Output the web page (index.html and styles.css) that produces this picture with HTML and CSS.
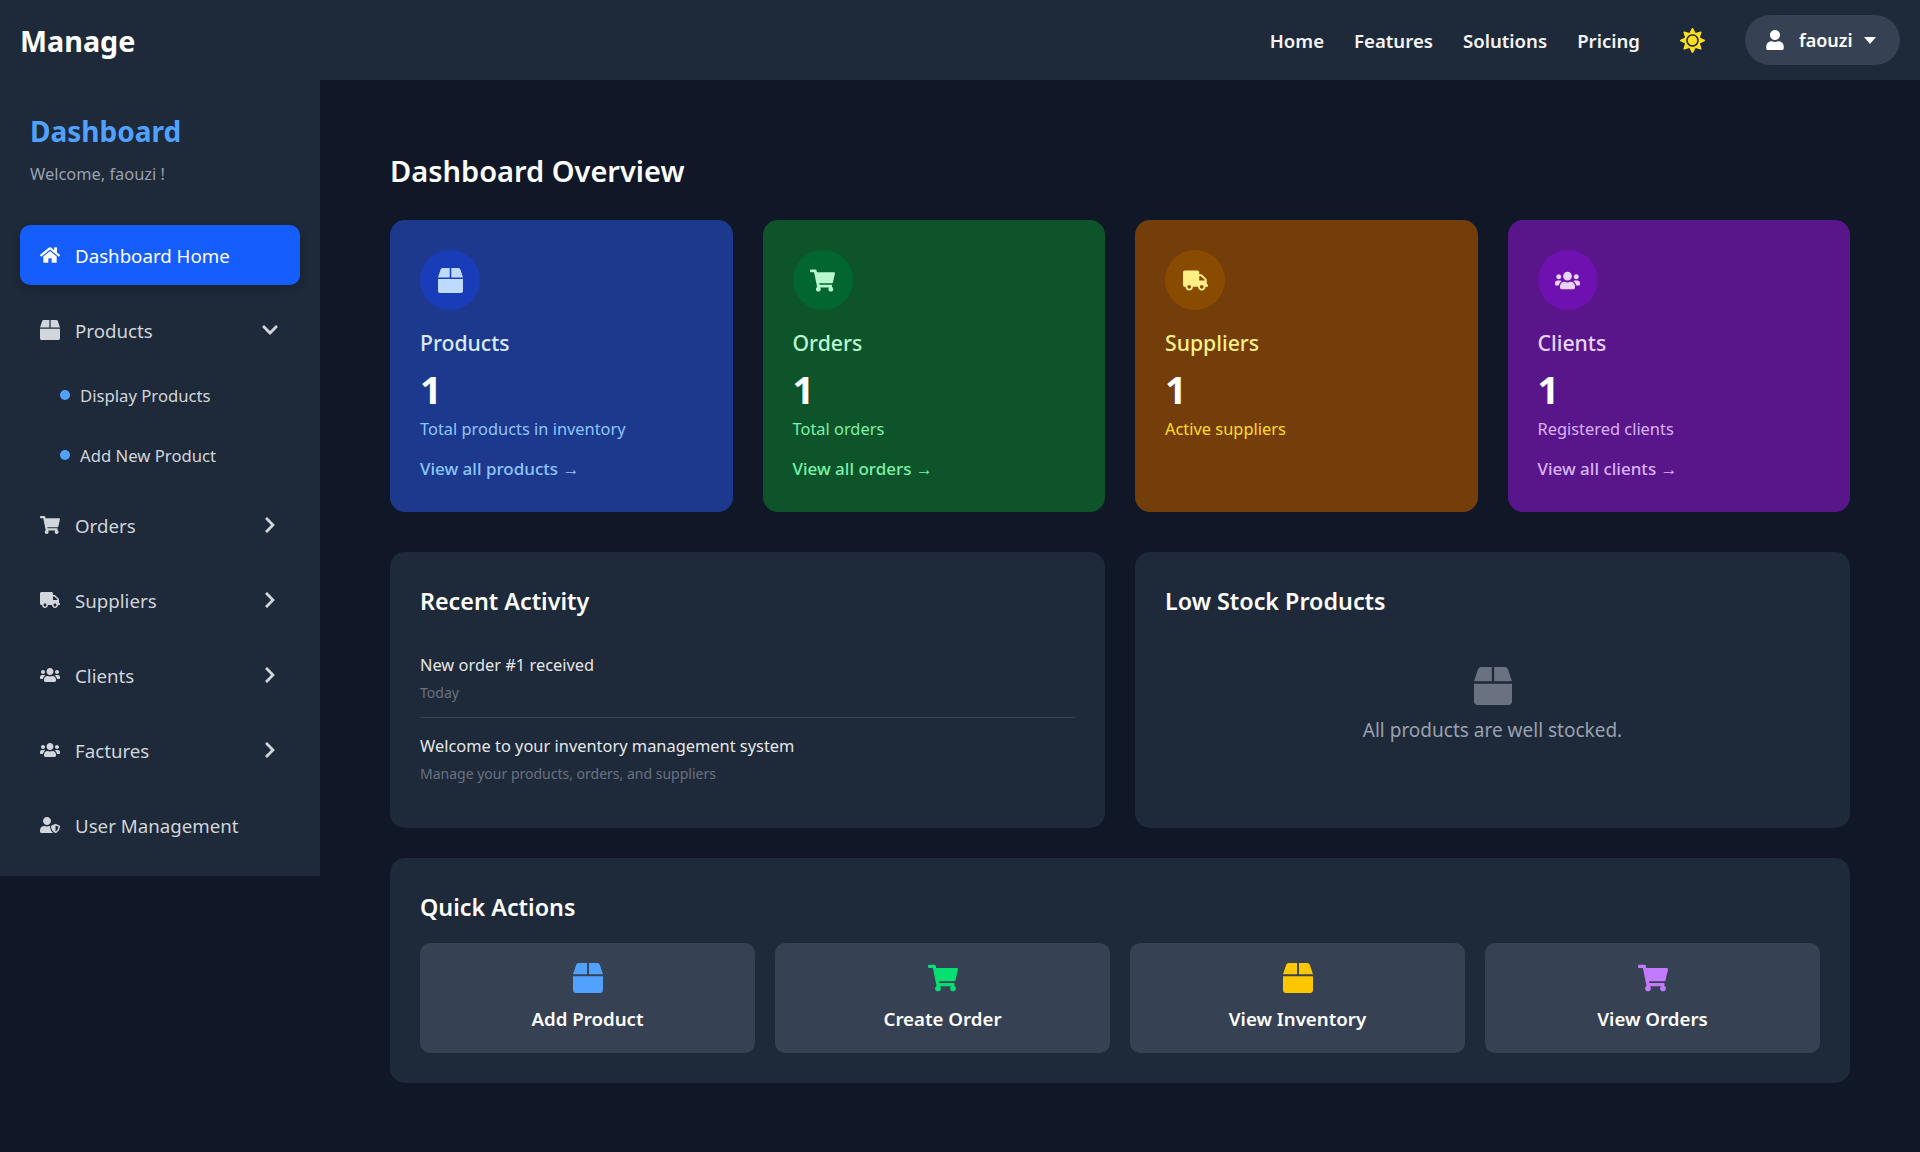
FILE: index.html
```html
<!DOCTYPE html>
<html lang="en">
<head>
  <meta charset="UTF-8" />
  <meta name="viewport" content="width=device-width, initial-scale=1" />
  <title>Manage - Dashboard</title>
  <link rel="stylesheet" href="styles.css">
</head>
<body>

  <!-- icon set -->
  <svg class="sprite" aria-hidden="true">
    <symbol id="i-home" viewBox="0 0 576 512"><path d="M280.37 148.26L96 300.11V464a16 16 0 0 0 16 16l112.06-.29a16 16 0 0 0 15.92-16V368a16 16 0 0 1 16-16h64a16 16 0 0 1 16 16v95.64a16 16 0 0 0 16 16.05L464 480a16 16 0 0 0 16-16V300L295.67 148.26a12.19 12.19 0 0 0-15.3 0zM571.6 251.47L488 182.56V44.05a12 12 0 0 0-12-12h-56a12 12 0 0 0-12 12v72.61L318.47 43a48 48 0 0 0-61 0L4.34 251.47a12 12 0 0 0-1.6 16.9l25.5 31A12 12 0 0 0 45.15 301l235.22-193.74a12.19 12.19 0 0 1 15.3 0L530.9 301a12 12 0 0 0 16.9-1.6l25.5-31a12 12 0 0 0-1.7-16.93z"/></symbol>
    <symbol id="i-box" viewBox="0 0 512 512"><path d="M509.5 184.6L458.9 32.8C452.4 13.2 434.1 0 413.4 0H272v192h238.7c-.4-2.5-.4-5-1.2-7.4zM240 0H98.6c-20.7 0-39 13.2-45.5 32.8L2.5 184.6c-.8 2.4-.8 4.9-1.2 7.4H240V0zM0 224v240c0 26.5 21.5 48 48 48h416c26.5 0 48-21.5 48-48V224H0z"/></symbol>
    <symbol id="i-cart" viewBox="0 0 576 512"><path d="M528.12 301.319l47.273-208C578.806 78.301 567.391 64 551.99 64H159.208l-9.166-44.81C147.758 8.021 137.93 0 126.529 0H24C10.745 0 0 10.745 0 24v16c0 13.255 10.745 24 24 24h69.883l70.248 343.435C147.325 417.1 136 435.222 136 456c0 30.928 25.072 56 56 56s56-25.072 56-56c0-15.674-6.447-29.835-16.824-40h209.647C430.447 426.165 424 440.326 424 456c0 30.928 25.072 56 56 56s56-25.072 56-56c0-22.172-12.888-41.332-31.579-50.405l5.517-24.276c3.413-15.018-8.002-29.319-23.403-29.319H218.117l-6.545-32h293.145c11.206 0 20.92-7.754 23.403-18.681z"/></symbol>
    <symbol id="i-truck" viewBox="0 0 640 512"><path d="M624 352h-16V243.9c0-12.7-5.1-24.9-14.1-33.9L494 110.1c-9-9-21.2-14.1-33.9-14.1H416V48c0-26.5-21.5-48-48-48H48C21.5 0 0 21.5 0 48v320c0 26.5 21.5 48 48 48h16c0 53 43 96 96 96s96-43 96-96h128c0 53 43 96 96 96s96-43 96-96h48c8.8 0 16-7.2 16-16v-32c0-8.8-7.2-16-16-16zM160 464c-26.5 0-48-21.5-48-48s21.5-48 48-48 48 21.5 48 48-21.5 48-48 48zm320 0c-26.5 0-48-21.5-48-48s21.5-48 48-48 48 21.5 48 48-21.5 48-48 48zm80-208H416V144h44.1l99.9 99.9V256z"/></symbol>
    <symbol id="i-users" viewBox="0 0 640 512"><path d="M96 224c35.3 0 64-28.7 64-64s-28.7-64-64-64-64 28.7-64 64 28.7 64 64 64zm448 0c35.3 0 64-28.7 64-64s-28.7-64-64-64-64 28.7-64 64 28.7 64 64 64zm32 32h-64c-17.6 0-33.5 7.1-45.1 18.6 40.3 22.1 68.9 62 75.1 109.4h66c17.7 0 32-14.3 32-32v-32c0-35.3-28.7-64-64-64zm-256 0c61.9 0 112-50.1 112-112S381.9 32 320 32 208 82.1 208 144s50.1 112 112 112zm76.8 32h-8.3c-20.8 10-43.9 16-68.5 16s-47.6-6-68.5-16h-8.3C179.6 288 128 339.6 128 403.2V432c0 26.5 21.5 48 48 48h288c26.5 0 48-21.5 48-48v-28.8c0-63.6-51.6-115.2-115.2-115.2zm-223.7-13.4C161.5 263.1 145.6 256 128 256H64c-35.3 0-64 28.7-64 64v32c0 17.7 14.3 32 32 32h65.9c6.3-47.4 34.9-87.3 75.2-109.4z"/></symbol>
    <symbol id="i-user-shield" viewBox="0 0 640 512"><path d="M622.3 271.1l-115.2-45c-4.1-1.6-12.6-3.7-22.2 0l-115.2 45c-10.7 4.2-17.7 14-17.7 24.9 0 111.6 68.7 188.8 132.9 213.9 9.6 3.7 18 1.6 22.2 0C558.4 489.9 640 420.5 640 296c0-10.9-7-20.7-17.7-24.9zM496 462.4V273.3l95.5 37.3c-5.6 87.1-60.9 135.4-95.5 151.8zM224 256c70.7 0 128-57.3 128-128S294.7 0 224 0 96 57.3 96 128s57.3 128 128 128zm96 40c0-2.5.8-4.8 1.1-7.2-2.5-.1-4.9-.8-7.5-.8h-16.7c-22.2 10.2-46.9 16-72.9 16s-50.6-5.8-72.9-16h-16.7C60.2 288 0 348.2 0 422.4V464c0 26.5 21.5 48 48 48h352c6.8 0 13.3-1.5 19.2-4-54-42.9-99.2-116.7-99.2-212z"/></symbol>
    <symbol id="i-user" viewBox="0 0 448 512"><path d="M224 256c70.7 0 128-57.3 128-128S294.7 0 224 0 96 57.3 96 128s57.3 128 128 128zm89.6 32h-16.7c-22.2 10.2-46.9 16-72.9 16s-50.6-5.8-72.9-16h-16.7C60.2 288 0 348.2 0 422.4V464c0 26.5 21.5 48 48 48h352c26.5 0 48-21.5 48-48v-41.6c0-74.2-60.2-134.4-134.4-134.4z"/></symbol>
    <symbol id="i-sun" viewBox="0 0 512 512"><path d="M256 160c-52.9 0-96 43.1-96 96s43.1 96 96 96 96-43.1 96-96-43.1-96-96-96zm246.4 80.5l-94.7-47.3 33.5-100.4c4.5-13.6-8.4-26.5-21.9-21.9l-100.4 33.5-47.4-94.8c-6.4-12.8-24.6-12.8-31 0l-47.3 94.7L92.7 70.8c-13.6-4.5-26.5 8.4-21.9 21.9l33.5 100.4-94.7 47.4c-12.8 6.4-12.8 24.6 0 31l94.7 47.3-33.5 100.5c-4.5 13.6 8.4 26.5 21.9 21.9l100.4-33.5 47.3 94.7c6.4 12.8 24.6 12.8 31 0l47.3-94.7 100.4 33.5c13.6 4.5 26.5-8.4 21.9-21.9l-33.5-100.4 94.7-47.3c13-6.5 13-24.7.2-31.1zm-155.9 106c-49.9 49.9-131.1 49.9-181 0-49.9-49.9-49.9-131.1 0-181 49.9-49.9 131.1-49.9 181 0 49.9 49.9 49.9 131.1 0 181z"/></symbol>
    <symbol id="i-down" viewBox="0 0 448 512"><path d="M207.029 381.476L12.686 187.132c-9.373-9.373-9.373-24.569 0-33.941l22.667-22.667c9.357-9.357 24.522-9.375 33.901-.04L224 284.505l154.745-154.021c9.379-9.335 24.544-9.317 33.901.04l22.667 22.667c9.373 9.373 9.373 24.569 0 33.941L240.971 381.476c-9.373 9.372-24.569 9.372-33.942 0z"/></symbol>
    <symbol id="i-right" viewBox="0 0 320 512"><path d="M285.476 272.971L91.132 467.314c-9.373 9.373-24.569 9.373-33.941 0l-22.667-22.667c-9.357-9.357-9.375-24.522-.04-33.901L188.505 256 34.484 101.255c-9.335-9.379-9.317-24.544.04-33.901l22.667-22.667c9.373-9.373 24.569-9.373 33.941 0L285.475 239.03c9.373 9.372 9.373 24.568.001 33.941z"/></symbol>
  </svg>

  <header class="topbar">
    <a class="brand" href="#">Manage</a>
    <nav class="topnav">
      <a href="#">Home</a>
      <a href="#">Features</a>
      <a href="#">Solutions</a>
      <a href="#">Pricing</a>
    </nav>
    <svg class="sun"><use href="#i-sun"/></svg>
    <button class="user-pill" type="button">
      <svg class="user-icon"><use href="#i-user"/></svg>
      <span>faouzi</span>
      <i class="caret"></i>
    </button>
  </header>

  <div class="layout">
    <aside class="sidebar">
      <div class="side-head">
        <h2>Dashboard</h2>
        <p>Welcome, faouzi !</p>
      </div>

      <a class="side-item active" href="#">
        <svg class="side-icon"><use href="#i-home"/></svg>
        <span>Dashboard Home</span>
      </a>

      <a class="side-item" href="#">
        <svg class="side-icon"><use href="#i-box"/></svg>
        <span>Products</span>
        <svg class="chev"><use href="#i-down"/></svg>
      </a>
      <ul class="sub-list">
        <li><a href="#">Display Products</a></li>
        <li><a href="#">Add New Product</a></li>
      </ul>

      <a class="side-item" href="#">
        <svg class="side-icon"><use href="#i-cart"/></svg>
        <span>Orders</span>
        <svg class="chev"><use href="#i-right"/></svg>
      </a>
      <a class="side-item" href="#">
        <svg class="side-icon"><use href="#i-truck"/></svg>
        <span>Suppliers</span>
        <svg class="chev"><use href="#i-right"/></svg>
      </a>
      <a class="side-item" href="#">
        <svg class="side-icon"><use href="#i-users"/></svg>
        <span>Clients</span>
        <svg class="chev"><use href="#i-right"/></svg>
      </a>
      <a class="side-item" href="#">
        <svg class="side-icon"><use href="#i-users"/></svg>
        <span>Factures</span>
        <svg class="chev"><use href="#i-right"/></svg>
      </a>
      <a class="side-item" href="#">
        <svg class="side-icon"><use href="#i-user-shield"/></svg>
        <span>User Management</span>
      </a>
    </aside>

    <main class="content">
      <h1>Dashboard Overview</h1>

      <section class="stats">
        <div class="stat stat-blue">
          <div class="stat-icon"><svg><use href="#i-box"/></svg></div>
          <h3>Products</h3>
          <div class="stat-num">1</div>
          <p>Total products in inventory</p>
          <a href="#">View all products →</a>
        </div>
        <div class="stat stat-green">
          <div class="stat-icon"><svg><use href="#i-cart"/></svg></div>
          <h3>Orders</h3>
          <div class="stat-num">1</div>
          <p>Total orders</p>
          <a href="#">View all orders →</a>
        </div>
        <div class="stat stat-amber">
          <div class="stat-icon"><svg><use href="#i-truck"/></svg></div>
          <h3>Suppliers</h3>
          <div class="stat-num">1</div>
          <p>Active suppliers</p>
        </div>
        <div class="stat stat-purple">
          <div class="stat-icon"><svg><use href="#i-users"/></svg></div>
          <h3>Clients</h3>
          <div class="stat-num">1</div>
          <p>Registered clients</p>
          <a href="#">View all clients →</a>
        </div>
      </section>

      <section class="two-col">
        <div class="panel">
          <h2>Recent Activity</h2>
          <div class="activity">
            <div class="activity-title">New order #1 received</div>
            <div class="activity-sub">Today</div>
          </div>
          <div class="activity">
            <div class="activity-title">Welcome to your inventory management system</div>
            <div class="activity-sub">Manage your products, orders, and suppliers</div>
          </div>
        </div>
        <div class="panel">
          <h2>Low Stock Products</h2>
          <div class="empty">
            <svg><use href="#i-box"/></svg>
            <p>All products are well stocked.</p>
          </div>
        </div>
      </section>

      <section class="panel quick">
        <h2>Quick Actions</h2>
        <div class="quick-grid">
          <a class="quick-btn q-blue" href="#"><svg><use href="#i-box"/></svg><span>Add Product</span></a>
          <a class="quick-btn q-green" href="#"><svg><use href="#i-cart"/></svg><span>Create Order</span></a>
          <a class="quick-btn q-yellow" href="#"><svg><use href="#i-box"/></svg><span>View Inventory</span></a>
          <a class="quick-btn q-purple" href="#"><svg><use href="#i-cart"/></svg><span>View Orders</span></a>
        </div>
      </section>
    </main>
  </div>

</body>
</html>
```

FILE: styles.css
```css
* {
  margin: 0; padding: 0; box-sizing: border-box;
}

body {
  background: #101828;
  color: #fff;
  font-family: "Noto Sans", "Open Sans", sans-serif;
  min-height: 100vh;
}

a {
  color: inherit;
  text-decoration: none;
}

svg {
  fill: currentColor;
  display: block;
}

.sprite {
  display: none;
}

/* top bar */
.topbar {
  height: 80px;
  background: #1e2939;
  display: flex;
  align-items: center;
  padding: 0 20px;
}

.brand {
  font-size: 28.7px;
  font-weight: 700;
  margin-right: auto;
}

.topnav {
  display: flex;
  gap: 30px;
  font-size: 18.6px;
  font-weight: 600;
  color: #f3f4f6;
}

.sun {
  width: 25px;
  height: 25px;
  color: #ffdf20;
  margin-left: 40px;
}

.user-pill {
  width: 155px;
  height: 50px;
  margin-left: 40px;
  background: #364153;
  border: none;
  border-radius: 25px;
  color: #fff;
  font: inherit;
  font-size: 18px;
  font-weight: 600;
  display: flex;
  align-items: center;
  padding-left: 21px;
}

.user-icon {
  width: 18px;
  height: 20px;
  margin-right: 15px;
}

.caret {
  width: 0;
  height: 0;
  margin-left: 11px;
  border-left: 6px solid transparent;
  border-right: 6px solid transparent;
  border-top: 7px solid #fff;
}

/* sidebar */
.layout {
  display: flex;
  align-items: flex-start;
}

.sidebar {
  width: 320px;
  flex-shrink: 0;
  background: #1e2939;
  padding: 0 20px 21px;
}

.side-head {
  padding: 30px 10px 0;
  height: 145px;
}

.side-head h2 {
  font-size: 28px;
  line-height: 42px;
  font-weight: 700;
  color: #51a2ff;
}

.side-head p {
  margin-top: 10px;
  font-size: 16.4px;
  line-height: 24px;
  color: #99a1af;
}

.side-item {
  height: 60px;
  display: flex;
  align-items: center;
  gap: 15px;
  padding: 0 20px;
  margin-bottom: 15px;
  border-radius: 10px;
  font-size: 18.7px;
  color: #d1d5dc;
}

.side-item:last-child {
  margin-bottom: 0;
}

.side-item.active {
  background: #155dfc;
  color: #fff;
  box-shadow: 0 3px 8px rgba(0, 0, 0, 0.2);
}

.side-icon {
  width: 20px;
  height: 20px;
  flex-shrink: 0;
}

.chev {
  width: 20px;
  height: 18px;
  margin-left: auto;
}

.sub-list {
  list-style: none;
  margin: -10px 0 10px;
}

.sub-list li {
  height: 60px;
  display: flex;
  align-items: center;
  padding-left: 40px;
  font-size: 16.7px;
  color: #d1d5dc;
}

.sub-list li::before {
  content: "";
  width: 10px;
  height: 10px;
  margin-right: 10px;
  border-radius: 50%;
  background: #51a2ff;
}

/* main */
.content {
  flex: 1;
  padding: 70px 70px 69px;
}

h1 {
  font-size: 29px;
  line-height: 41px;
  font-weight: 600;
  margin-bottom: 29px;
}

.stats {
  display: grid;
  grid-template-columns: repeat(4, 1fr);
  gap: 30px;
  margin-bottom: 40px;
}

.stat {
  height: 292px;
  padding: 30px;
  border-radius: 15px;
}

.stat-icon {
  width: 60px;
  height: 60px;
  border-radius: 50%;
  display: flex;
  align-items: center;
  justify-content: center;
  margin-bottom: 18px;
}

.stat-icon svg {
  width: 25px;
  height: 25px;
}

.stat h3 {
  font-size: 21.2px;
  line-height: 30px;
  font-weight: 500;
}

.stat-num {
  margin-top: 6px;
  font-size: 38px;
  line-height: 50px;
  font-weight: 700;
  color: #fff;
}

.stat p {
  margin-top: 2px;
  font-size: 16.4px;
  line-height: 26px;
}

.stat a {
  display: block;
  margin-top: 15px;
  font-size: 17px;
  line-height: 24px;
  font-weight: 500;
}

.stat-blue { background: #1c398e; }
.stat-blue .stat-icon { background: #193cb8; color: #bedbff; }
.stat-blue h3 { color: #dbeafe; }
.stat-blue p, .stat-blue a { color: #8ec5ff; }

.stat-green { background: #0d542b; }
.stat-green .stat-icon { background: #016630; color: #b9f8cf; }
.stat-green h3 { color: #b9f8cf; }
.stat-green p, .stat-green a { color: #7bf1a8; }

.stat-amber { background: #733e0a; }
.stat-amber .stat-icon { background: #894b00; color: #fff085; }
.stat-amber h3 { color: #fff085; }
.stat-amber p { color: #ffdf20; }

.stat-purple { background: #59168b; }
.stat-purple .stat-icon { background: #6e11b0; color: #e9d4ff; }
.stat-purple h3 { color: #e9d4ff; }
.stat-purple p, .stat-purple a { color: #dab2ff; }

.two-col {
  display: grid;
  grid-template-columns: 1fr 1fr;
  gap: 30px;
  margin-bottom: 30px;
}

.panel {
  background: #1e2939;
  border-radius: 15px;
  padding: 30px;
}

.panel h2 {
  font-size: 23.3px;
  line-height: 38px;
  font-weight: 600;
  margin-bottom: 32px;
}

.activity {
  padding-bottom: 13px;
  border-bottom: 1px solid #364153;
  margin-bottom: 15px;
}

.activity:last-child {
  border-bottom: none;
  margin-bottom: 0;
}

.activity-title {
  font-size: 16.4px;
  line-height: 26px;
  color: #e5e7eb;
}

.activity-sub {
  margin-top: 4px;
  font-size: 14px;
  line-height: 22px;
  color: #6a7282;
}

.empty {
  padding-top: 15px;
  display: flex;
  flex-direction: column;
  align-items: center;
  color: #99a1af;
}

.empty svg {
  width: 38px;
  height: 38px;
  color: #6a7282;
  margin-bottom: 10px;
}

.empty p {
  font-size: 19px;
  line-height: 30px;
}

.quick h2 {
  margin-bottom: 17px;
}

.quick-grid {
  display: grid;
  grid-template-columns: repeat(4, 1fr);
  gap: 20px;
}

.quick-btn {
  height: 110px;
  padding-top: 20px;
  background: #364153;
  border-radius: 10px;
  display: flex;
  flex-direction: column;
  align-items: center;
}

.quick-btn svg {
  width: 30px;
  height: 30px;
  margin-bottom: 13px;
}

.quick-btn span {
  font-size: 18.7px;
  line-height: 26px;
  font-weight: 600;
  color: #fff;
}

.q-blue { color: #51a2ff; }
.q-green { color: #05df72; }
.q-yellow { color: #fdc700; }
.q-purple { color: #c27aff; }
```
